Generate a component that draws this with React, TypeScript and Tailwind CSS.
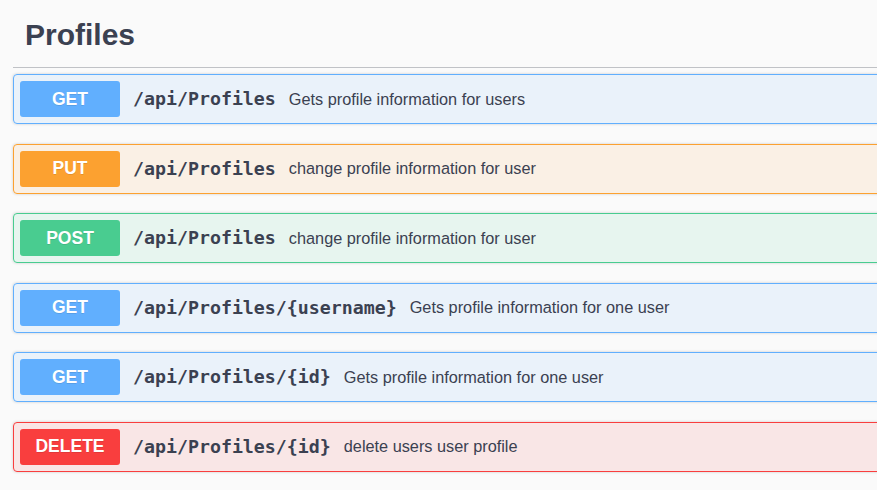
import React from "react";

type Method = "GET" | "PUT" | "POST" | "DELETE";

interface Endpoint {
  method: Method;
  path: string;
  summary: string;
}

const endpoints: Endpoint[] = [
  { method: "GET", path: "/api/Profiles", summary: "Gets profile information for users" },
  { method: "PUT", path: "/api/Profiles", summary: "change profile information for user" },
  { method: "POST", path: "/api/Profiles", summary: "change profile information for user" },
  { method: "GET", path: "/api/Profiles/{username}", summary: "Gets profile information for one user" },
  { method: "GET", path: "/api/Profiles/{id}", summary: "Gets profile information for one user" },
  { method: "DELETE", path: "/api/Profiles/{id}", summary: "delete users user profile" },
];

const styles: Record<Method, { card: string; badge: string }> = {
  GET: { card: "border-[#61affe] bg-[#61affe]/10", badge: "bg-[#61affe]" },
  PUT: { card: "border-[#fca130] bg-[#fca130]/10", badge: "bg-[#fca130]" },
  POST: { card: "border-[#49cc90] bg-[#49cc90]/10", badge: "bg-[#49cc90]" },
  DELETE: { card: "border-[#f93e3e] bg-[#f93e3e]/10", badge: "bg-[#f93e3e]" },
};

const OperationRow: React.FC<{ endpoint: Endpoint }> = ({ endpoint }) => {
  const s = styles[endpoint.method];
  return (
    <div
      className={`flex items-center rounded-[4px] border p-[6px] shadow-[0_0_3px_rgba(0,0,0,0.19)] ${s.card}`}
    >
      <span
        className={`flex h-[36px] w-[100px] flex-none items-center justify-center rounded-[3px] text-[17.5px] font-bold text-white [text-shadow:0_1px_0_rgba(0,0,0,0.1)] ${s.badge}`}
        style={{ fontFamily: '"Liberation Sans", Arial, sans-serif' }}
      >
        {endpoint.method}
      </span>
      <span
        className="pl-[13px] pr-[13px] text-[18.25px] font-bold text-[#3b4151]"
        style={{ fontFamily: '"DejaVu Sans Mono", monospace' }}
      >
        {endpoint.path}
      </span>
      <span
        className="text-[16.3px] text-[#3b4151]"
        style={{ fontFamily: '"Liberation Sans", Arial, sans-serif' }}
      >
        {endpoint.summary}
      </span>
    </div>
  );
};

export default function App() {
  return (
    <div className="min-h-screen w-screen overflow-hidden bg-[#fafafa]">
      <div className="w-[1100px] pl-[13px]">
        <h3
          className="flex h-[68px] items-center border-b border-[#3b4151]/30 pl-[12px] pt-[2px] text-[30px] font-bold text-[#3b4151]"
          style={{ fontFamily: '"Liberation Sans", Arial, sans-serif' }}
        >
          Profiles
        </h3>
        <div className="mt-[6px] flex flex-col gap-[19.5px]">
          {endpoints.map((e, i) => (
            <OperationRow key={i} endpoint={e} />
          ))}
        </div>
      </div>
    </div>
  );
}
